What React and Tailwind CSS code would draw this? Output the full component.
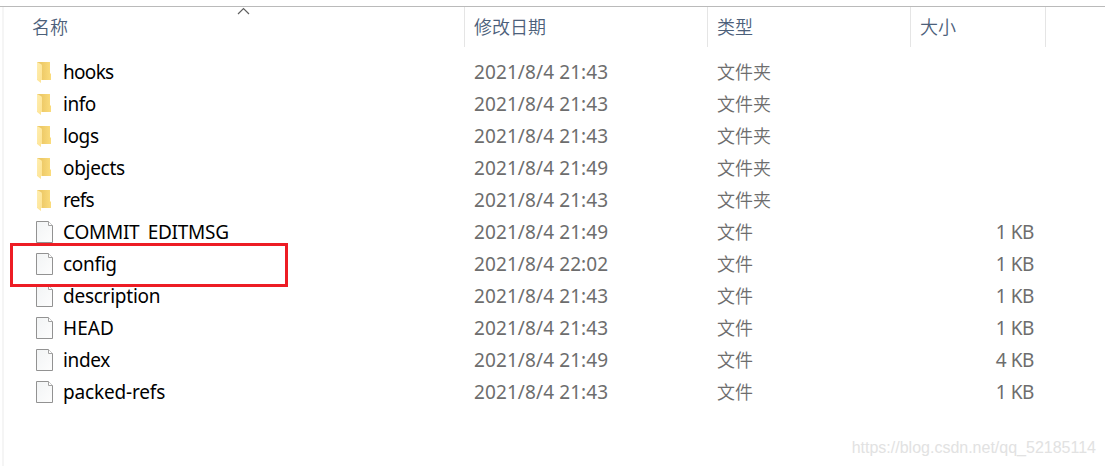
import clsx from 'clsx'

const files = [
    { name: 'hooks', date: '2021/8/4 21:43', folder: true, tracking: 'tracking-[-0.7px]' },
    { name: 'info', date: '2021/8/4 21:43', folder: true, tracking: 'tracking-[-0.5px]' },
    { name: 'logs', date: '2021/8/4 21:43', folder: true, tracking: 'tracking-[-0.4px]' },
    { name: 'objects', date: '2021/8/4 21:49', folder: true, tracking: 'tracking-[-0.3px]' },
    { name: 'refs', date: '2021/8/4 21:43', folder: true, tracking: 'tracking-[-0.7px]' },
    { name: 'COMMIT_EDITMSG', date: '2021/8/4 21:49', size: '1 KB', tracking: 'tracking-[-0.25px]' },
    { name: 'config', date: '2021/8/4 22:02', size: '1 KB', marked: true, tracking: 'tracking-[-0.3px]' },
    { name: 'description', date: '2021/8/4 21:43', size: '1 KB', tracking: 'tracking-[-0.25px]' },
    { name: 'HEAD', date: '2021/8/4 21:43', size: '1 KB', tracking: 'tracking-[0.1px]' },
    { name: 'index', date: '2021/8/4 21:49', size: '4 KB', tracking: 'tracking-[-0.35px]' },
    { name: 'packed-refs', date: '2021/8/4 21:43', size: '1 KB', tracking: 'tracking-[-0.16px]' },
]

function FolderIcon() {
    return (
        <svg className="mt-0.5" width="14" height="22" viewBox="0 0 14 22">
            <defs>
                <linearGradient id="folderBack" x1="0" y1="0" x2="1" y2="0">
                    <stop offset="0.3" stopColor="#edc967" />
                    <stop offset="1" stopColor="#fbdc7c" />
                </linearGradient>
                <linearGradient id="folderFront" x1="0" y1="0" x2="1" y2="1">
                    <stop offset="0" stopColor="#ffeeb0" />
                    <stop offset="1" stopColor="#fde291" />
                </linearGradient>
            </defs>
            <path d="M0 0H13V11L14 12V18H0Z" fill="url(#folderBack)" />
            <path d="M0 0L4.3 2.2Q5 2.8 5 4V18H4V21L0.6 18.4Q0 18 0 17Z" fill="url(#folderFront)" />
        </svg>
    )
}

function FileIcon() {
    return (
        <svg width="17" height="22" viewBox="0 0 17 22">
            <defs>
                <linearGradient id="paper" x1="0" y1="0" x2="1" y2="1">
                    <stop offset="0" stopColor="#f2f4f5" />
                    <stop offset="1" stopColor="#fdfdfd" />
                </linearGradient>
            </defs>
            <path d="M0.5 0.5H12.5L16.5 4.5V21.5H0.5Z" fill="url(#paper)" stroke="#929292" />
            <path d="M12.5 0.5V4.5H16.5" fill="#ffffff" stroke="#a2a2a2" />
        </svg>
    )
}

// the underscore sits lower than the font puts it
function FileName({ name }) {
    const parts = name.split('_')
    if (parts.length === 1) return name
    return (
        <>
            {parts[0]}<span className="relative top-[3px]">_</span>{parts[1]}
        </>
    )
}

function HeaderCell({ className, children }) {
    return (
        <div className={clsx('relative flex h-10 items-center border-r border-[#e5e5e5] text-[#4c607a]', className)}>
            {children}
        </div>
    )
}

function FileRow({ file }) {
    return (
        <div className="relative flex h-8 items-center text-[#6d6d6d]">
            <div className="flex w-[438px] items-center text-black">
                <div className="flex w-[27px] items-center">
                    {file.folder ? <span className="ml-px"><FolderIcon /></span> : <FileIcon />}
                </div>
                <span className={clsx('text-[19px]', file.tracking)}><FileName name={file.name} /></span>
            </div>
            <div className="w-[243px] text-[19px] tracking-[0.1px]">{file.date}</div>
            <div className="w-[203px] font-[350]">{file.folder ? '文件夹' : '文件'}</div>
            <div className="w-[114px] text-right text-[19px] tracking-[-0.4px]">{file.size}</div>
            {file.marked && <div className="absolute -top-[5px] -left-[26px] z-10 h-11 w-[278px] border-3 border-[#ed1c24]" />}
        </div>
    )
}

export default function App() {
    return (
        <div className="relative h-[466px] w-[1105px] overflow-hidden bg-white pt-1.5 font-['Noto_Sans','Noto_Sans_CJK_SC',sans-serif] text-[18px] leading-8 whitespace-nowrap">
            <div className="h-[460px] border-t border-[#bababa]">
                <div className="ml-[2px] h-full border-l-2 border-[#f5f5f5]">
                    <div className="flex font-[350]">
                        <HeaderCell className="w-[461px] pl-[28px]">
                            名称
                            <svg className="absolute top-0 left-[233px]" width="13" height="8" viewBox="0 0 13 8" fill="none" stroke="#606060" strokeWidth="1.2">
                                <path d="M1 7L6.5 1.5L12 7" />
                            </svg>
                        </HeaderCell>
                        <HeaderCell className="w-[243px] pl-[9px]">修改日期</HeaderCell>
                        <HeaderCell className="w-[203px] pl-[9px]">类型</HeaderCell>
                        <HeaderCell className="w-[135px] pl-[9px]">大小</HeaderCell>
                    </div>
                    <div className="mt-[9px] ml-[32px]">
                        {files.map((file) => <FileRow key={file.name} file={file} />)}
                    </div>
                </div>
            </div>
            <div className="absolute right-[9px] bottom-1.5 font-['Liberation_Sans',sans-serif] text-base leading-6 text-[#e2e2e2]">
                https://blog.csdn.net/qq_52185114
            </div>
        </div>
    )
}
